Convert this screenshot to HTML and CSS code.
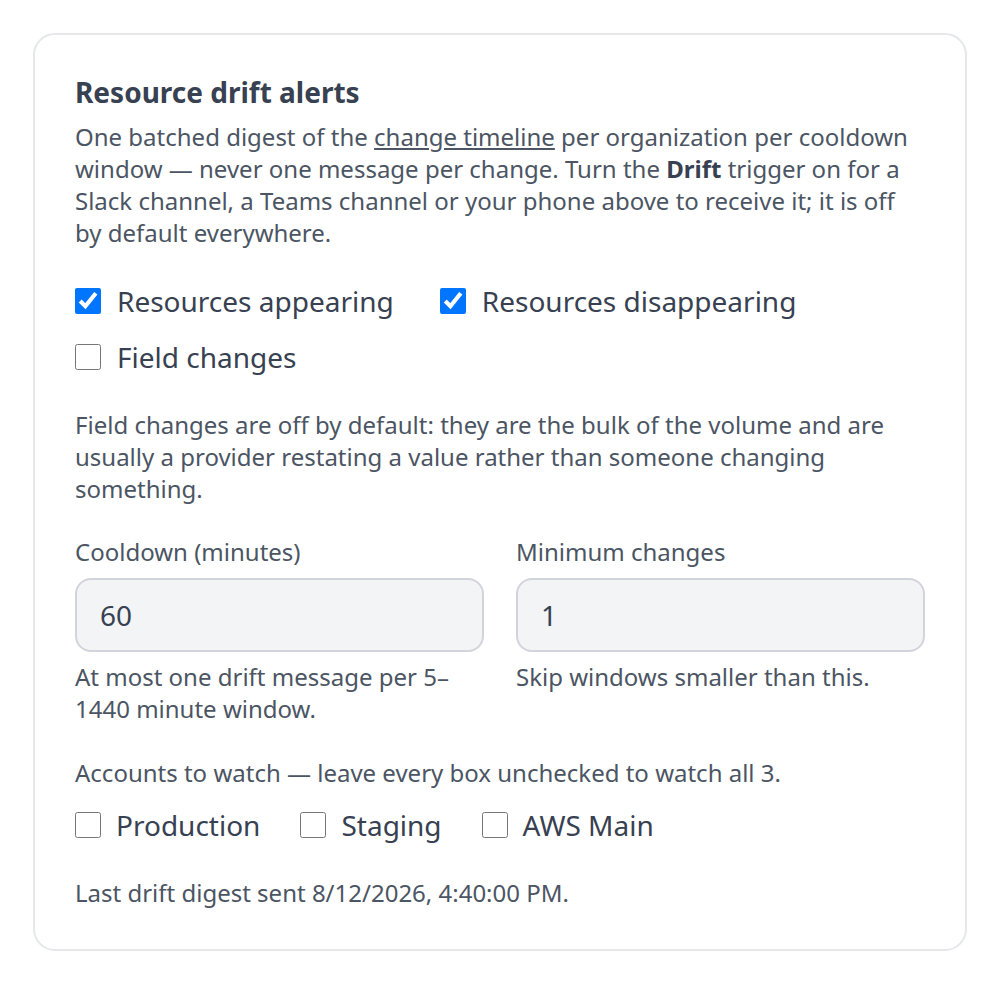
FILE: index.html
```html
<!DOCTYPE html>
<html lang="en">
<head>
    <meta charset="UTF-8">
    <meta name="viewport" content="width=device-width, initial-scale=1.0">
    <title>Resource drift alerts</title>
    <link rel="stylesheet" href="styles.css">
</head>
<body>
    <section class="card">
        <h2>Resource drift alerts</h2>
        <p class="intro">One batched digest of the <a href="#">change timeline</a> per organization per cooldown window — never one message per change. Turn the <strong>Drift</strong> trigger on for a Slack channel, a Teams channel or your phone above to receive it; it is off by default everywhere.</p>

        <div class="checks kinds">
            <label class="check"><input type="checkbox" checked> Resources appearing</label>
            <label class="check"><input type="checkbox" checked> Resources disappearing</label>
            <label class="check"><input type="checkbox"> Field changes</label>
        </div>

        <p class="note">Field changes are off by default: they are the bulk of the volume and are usually a provider restating a value rather than someone changing something.</p>

        <div class="fields">
            <div class="field">
                <label for="cooldown">Cooldown (minutes)</label>
                <input type="number" id="cooldown" value="60">
                <p class="hint">At most one drift message per 5–1440 minute window.</p>
            </div>
            <div class="field">
                <label for="minChanges">Minimum changes</label>
                <input type="number" id="minChanges" value="1">
                <p class="hint">Skip windows smaller than this.</p>
            </div>
        </div>

        <p class="note">Accounts to watch — leave every box unchecked to watch all 3.</p>
        <div class="checks accounts">
            <label class="check"><input type="checkbox"> Production</label>
            <label class="check"><input type="checkbox"> Staging</label>
            <label class="check"><input type="checkbox"> AWS Main</label>
        </div>

        <p class="note last">Last drift digest sent 8/12/2026, 4:40:00 PM.</p>
    </section>
</body>
</html>
```

FILE: styles.css
```css
body {
    font-family: 'Noto Sans', sans-serif;
    color: #4b5563;
    margin: 0;
    padding: 33px;
    background-color: #fff;
}
.card {
    border: 2px solid #e5e7eb;
    border-radius: 22px;
    padding: 40px;
}
h2 {
    margin: 0;
    font-size: 28px;
    line-height: 34px;
    font-weight: bold;
    color: #374151;
}
p {
    margin: 0;
    font-size: 24px;
    line-height: 32px;
}
.intro {
    margin-top: 12px;
}
.intro a {
    color: inherit;
}
.intro strong {
    color: #374151;
}
.checks {
    display: flex;
    flex-wrap: wrap;
    row-gap: 16px;
    column-gap: 46px;
    margin-top: 32px;
}
.accounts {
    column-gap: 40px;
    margin-top: 16px;
}
.check {
    display: flex;
    align-items: center;
    gap: 16px;
    height: 40px;
    font-size: 28px;
    color: #374151;
}
.check input {
    width: 26px;
    height: 26px;
    margin: 0;
}
.accounts .check {
    gap: 15px;
}
.note {
    margin-top: 32px;
}
.fields {
    display: grid;
    grid-template-columns: 1fr 1fr;
    gap: 32px;
    margin-top: 31px;
}
.field label {
    display: block;
    font-size: 24px;
    line-height: 32px;
    margin-bottom: 10px;
}
.field input {
    box-sizing: border-box;
    width: 100%;
    height: 74px;
    padding: 0 23px;
    border: 2px solid #d1d5db;
    border-radius: 16px;
    background-color: #f3f4f6;
    font-family: inherit;
    font-size: 28px;
    color: #374151;
    -moz-appearance: textfield;
}
.field input::-webkit-inner-spin-button,
.field input::-webkit-outer-spin-button {
    -webkit-appearance: none;
    margin: 0;
}
.hint {
    margin-top: 9px;
}
```
